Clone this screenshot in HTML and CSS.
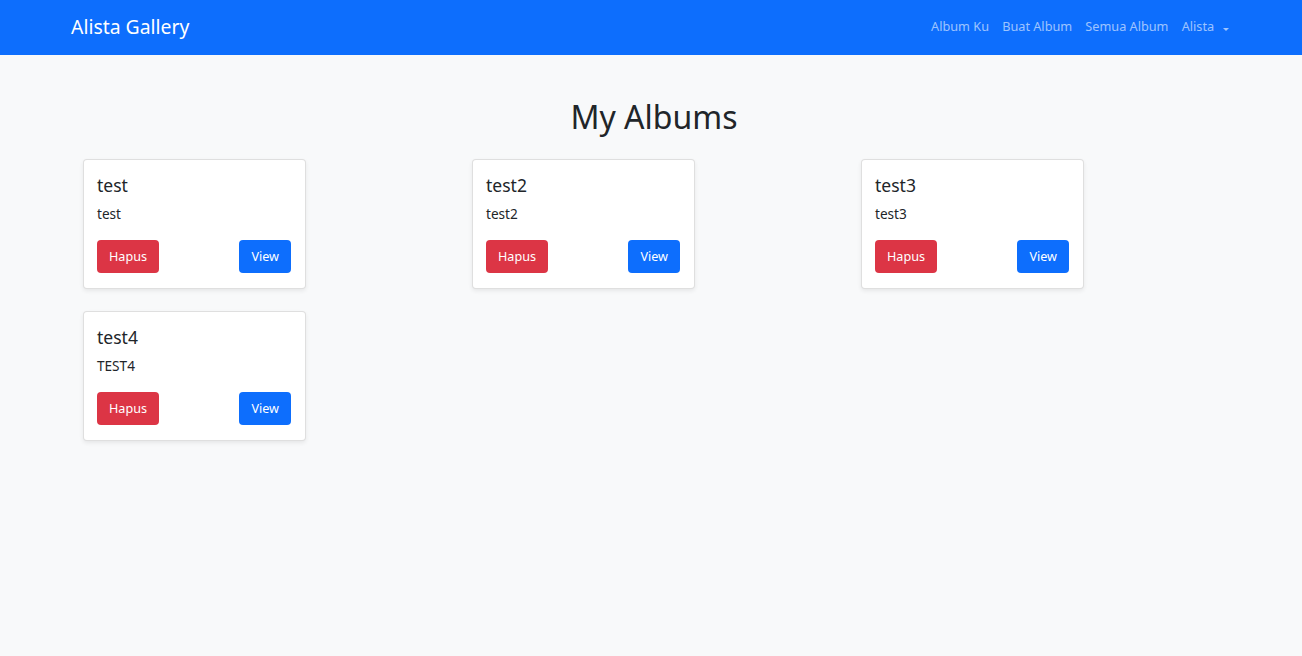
FILE: index.html
```html
<!DOCTYPE html>
<html lang="id">
<head>
<meta charset="utf-8">
<title>Alista Gallery</title>
<link rel="stylesheet" href="styles.css">
</head>
<body>
<nav class="navbar">
  <div class="nav-inner">
    <a class="brand" href="#">Alista Gallery</a>
    <ul class="nav-links">
      <li><a href="#">Album Ku</a></li>
      <li><a href="#">Buat Album</a></li>
      <li><a href="#">Semua Album</a></li>
      <li><a href="#" class="dropdown">Alista <span class="caret"></span></a></li>
    </ul>
  </div>
</nav>
<main class="content">
  <h1 class="page-title">My Albums</h1>
  <div class="album-grid">
    <div class="card">
      <h5 class="card-title">test</h5>
      <p class="card-text">test</p>
      <div class="card-actions">
        <button class="btn btn-danger">Hapus</button>
        <button class="btn btn-primary">View</button>
      </div>
    </div>
    <div class="card">
      <h5 class="card-title">test2</h5>
      <p class="card-text">test2</p>
      <div class="card-actions">
        <button class="btn btn-danger">Hapus</button>
        <button class="btn btn-primary">View</button>
      </div>
    </div>
    <div class="card">
      <h5 class="card-title">test3</h5>
      <p class="card-text">test3</p>
      <div class="card-actions">
        <button class="btn btn-danger">Hapus</button>
        <button class="btn btn-primary">View</button>
      </div>
    </div>
    <div class="card">
      <h5 class="card-title">test4</h5>
      <p class="card-text">TEST4</p>
      <div class="card-actions">
        <button class="btn btn-danger">Hapus</button>
        <button class="btn btn-primary">View</button>
      </div>
    </div>
  </div>
</main>
</body>
</html>
```
FILE: styles.css
```css
* { box-sizing: border-box; }
html, body { margin: 0; padding: 0; }
body {
  background: #f8f9fa;
  font-family: "Noto Sans", "Open Sans", sans-serif;
  font-size: 14px;
  color: #212529;
  height: 656px;
}
.navbar {
  background: #0d6efd;
  height: 55px;
}
.nav-inner {
  height: 55px;
  padding: 0 66px 0 71px;
  display: flex;
  align-items: center;
  justify-content: space-between;
}
.brand {
  color: #fff;
  text-decoration: none;
  font-size: 19.4px;
  line-height: 1;
  margin-top: -1px;
}
.nav-links {
  list-style: none;
  margin: 0;
  padding: 0;
  display: flex;
  margin-top: -3px;
}
.nav-links a {
  display: block;
  color: rgba(255,255,255,0.6);
  text-decoration: none;
  font-size: 12.7px;
  padding: 0 6.6px;
  line-height: 20px;
}
.dropdown { display: flex; align-items: center; }
.caret {
  display: inline-block;
  margin-left: 6px;
  width: 0; height: 0;
  border-left: 3px solid transparent;
  border-right: 3px solid transparent;
  border-top: 3.5px solid rgba(255,255,255,0.6);
  margin-top: 1px;
}
.content {
  padding: 0 0 0 83px;
}
.page-title {
  margin: 40px 0 0;
  text-align: center;
  font-weight: 400;
  font-size: 32px;
  line-height: 44px;
  color: #212529;
  padding-right: 77px;
  height: 64px;
}
.album-grid {
  display: grid;
  grid-template-columns: repeat(3, 389px);
  row-gap: 22px;
}
.card {
  width: 223px;
  height: 130px;
  background: #fff;
  border: 1px solid rgba(0,0,0,0.125);
  border-radius: 4px;
  box-shadow: 0 2px 4px rgba(0,0,0,0.075);
  padding: 13px 14px 15px 13px;
  display: flex;
  flex-direction: column;
}
.card-title {
  margin: 0;
  font-weight: 400;
  font-size: 17.5px;
  line-height: 24px;
  color: #212529;
}
.card-text {
  margin: 7px 0 0;
  font-size: 13.6px;
  line-height: 20px;
}
.card-actions {
  margin-top: auto;
  display: flex;
  justify-content: space-between;
}
.btn {
  border: none;
  border-radius: 4px;
  color: #fff;
  font-family: inherit;
  font-size: 12.6px;
  height: 33px;
  padding: 0 12px;
  cursor: pointer;
}
.btn-danger { background: #dc3545; }
.btn-primary { background: #0d6efd; }
```
